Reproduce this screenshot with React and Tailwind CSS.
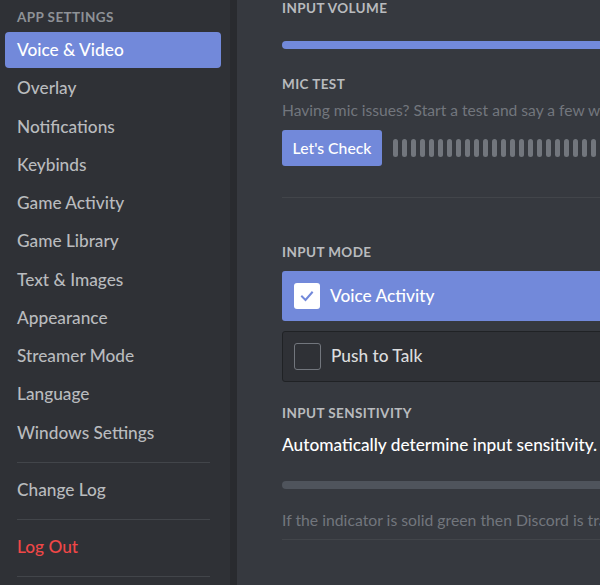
import React from "react";

const items = [
  "Voice & Video",
  "Overlay",
  "Notifications",
  "Keybinds",
  "Game Activity",
  "Game Library",
  "Text & Images",
  "Appearance",
  "Streamer Mode",
  "Language",
  "Windows Settings",
];

function Item({ label, active, red }) {
  return (
    <div
      className={
        "ml-[5px] w-[216px] h-[36px] mb-[2.25px] pl-[12px] flex items-center rounded-[4px] text-[17.25px] font-medium " +
        (active
          ? "bg-[#7289da] text-white"
          : red
          ? "text-[#f04747]"
          : "text-[#b9bbbe]")
      }
    >
      {label}
    </div>
  );
}

function Divider() {
  return <div className="ml-[17px] w-[193px] h-px bg-[#42454a]" />;
}

export default function App() {
  const bars = Array.from({ length: 26 });
  return (
    <div
      className="w-[600px] h-[585px] overflow-hidden flex bg-[#36393f]"
      style={{ fontFamily: 'Lato, "Noto Sans", sans-serif' }}
    >
      <div className="w-[230px] shrink-0 bg-[#2f3136] flex flex-col">
        <div className="mt-[5px] h-[24px] mb-[3px] pl-[17px] flex items-center text-[13.5px] font-bold uppercase text-[#8e9297] tracking-[0.03em]">
          App Settings
        </div>
        {items.map((l, i) => (
          <Item key={l} label={l} active={i === 0} />
        ))}
        <div className="mt-[9px] mb-[9px]">
          <Divider />
        </div>
        <Item label="Change Log" />
        <div className="mt-[8.75px] mb-[9px]">
          <Divider />
        </div>
        <Item label="Log Out" red />
        <div className="mt-[8.75px]">
          <Divider />
        </div>
      </div>
      <div className="w-[7px] shrink-0 bg-[#292b2f]" />
      <div className="flex-1 overflow-hidden pl-[45px]">
        <div className="w-[660px] whitespace-nowrap">
          <div className="h-[16px] leading-[16px] text-[13.5px] font-bold uppercase text-[#b9bbbe] tracking-[0.03em]">
            Input Volume
          </div>
          <div className="mt-[24.5px] h-[8px] rounded-full bg-[#7289da]" />
          <div className="mt-[27.5px] h-[16px] leading-[16px] text-[13.5px] font-bold uppercase text-[#b9bbbe] tracking-[0.03em]">
            Mic Test
          </div>
          <div className="mt-[8px] h-[20px] leading-[20px] text-[15.6px] text-[#72767d]">
            Having mic issues? Start a test and say a few words we'll play them back to you.
          </div>
          <div className="mt-[9.5px] flex items-center">
            <div className="w-[100px] h-[36px] rounded-[3px] bg-[#7289da] text-white text-[15.75px] font-medium flex items-center justify-center">
              Let's Check
            </div>
            <div className="ml-[11px] flex gap-[4px]">
              {bars.map((_, i) => (
                <div key={i} className="w-[5px] h-[18px] rounded-full bg-[#72767d]" />
              ))}
            </div>
          </div>
          <div className="mt-[31.5px] h-px bg-[#42454a]" />
          <div className="mt-[46px] h-[16px] leading-[16px] text-[13.5px] font-bold uppercase text-[#b9bbbe] tracking-[0.03em]">
            Input Mode
          </div>
          <div className="mt-[10.5px] h-[50.5px] rounded-[3px] bg-[#7289da] flex items-center pl-[12px]">
            <div className="w-[26px] h-[26px] rounded-[3px] bg-white flex items-center justify-center">
              <svg width="18" height="18" viewBox="0 0 18 18" fill="none">
                <path d="M4 9.5 L7.5 13 L14 5.5" stroke="#7289da" strokeWidth="2" strokeLinecap="square" />
              </svg>
            </div>
            <span className="ml-[10px] text-[17.25px] font-medium text-white">Voice Activity</span>
          </div>
          <div className="mt-[10px] h-[50.5px] rounded-[3px] bg-[#2f3136] border border-[#202225] flex items-center pl-[11px]">
            <div className="w-[27px] h-[27px] rounded-[3px] border border-[#72767d]" />
            <span className="ml-[10px] text-[17.25px] font-medium text-[#dcddde]">Push to Talk</span>
          </div>
          <div className="mt-[23px] h-[16px] leading-[16px] text-[13.5px] font-bold uppercase text-[#b9bbbe] tracking-[0.03em]">
            Input Sensitivity
          </div>
          <div className="mt-[12px] h-[24px] leading-[24px] text-[17.25px] font-medium text-white">
            Automatically determine input sensitivity.
          </div>
          <div className="mt-[24px] h-[8px] rounded-full bg-[#4f545c]" />
          <div className="mt-[21px] h-[20px] leading-[20px] text-[15.75px] text-[#72767d]">
            If the indicator is solid green then Discord is transmitting your beautiful voice.
          </div>
          <div className="mt-[9px] h-px bg-[#42454a]" />
        </div>
      </div>
    </div>
  );
}
